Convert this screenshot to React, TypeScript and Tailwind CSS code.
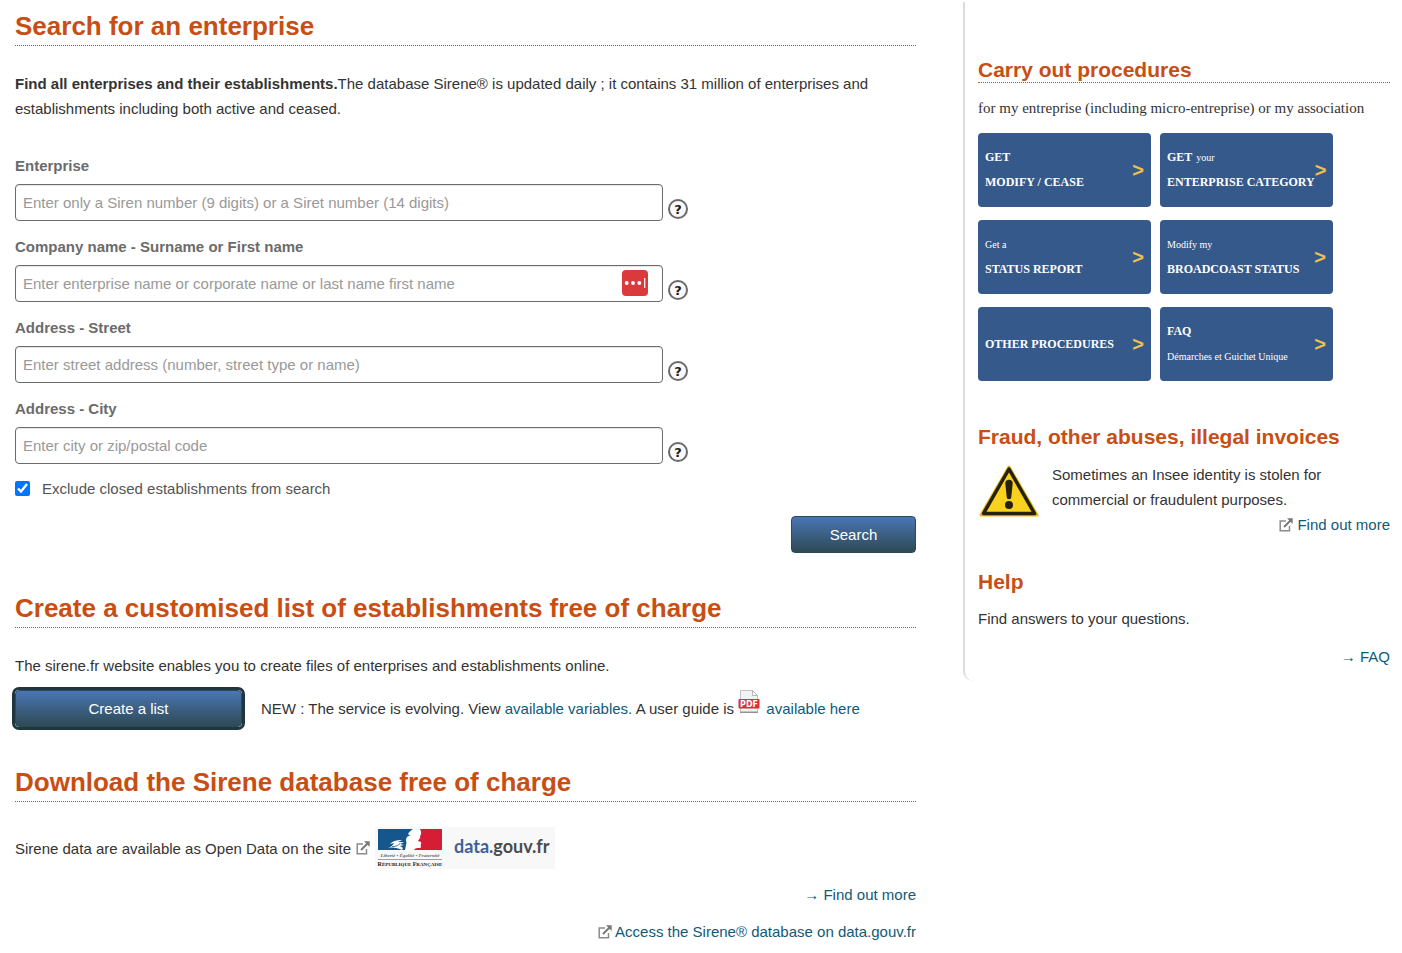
import React from "react";

type Field = { id: string; label: string; placeholder: string; vault?: boolean };

const fields: Field[] = [
  {
    id: "enterprise",
    label: "Enterprise",
    placeholder: "Enter only a Siren number (9 digits) or a Siret number (14 digits)",
  },
  {
    id: "company",
    label: "Company name - Surname or First name",
    placeholder: "Enter enterprise name or corporate name or last name first name",
    vault: true,
  },
  {
    id: "street",
    label: "Address - Street",
    placeholder: "Enter street address (number, street type or name)",
  },
  {
    id: "city",
    label: "Address - City",
    placeholder: "Enter city or zip/postal code",
  },
];

const big = "text-[12px] font-bold";
const small = "text-[10px]";

const tiles = [
  [{ text: "GET", style: big }, { text: "MODIFY / CEASE", style: big }],
  [{ text: "GET", extra: "your", style: big }, { text: "ENTERPRISE CATEGORY", style: big }],
  [{ text: "Get a", style: small }, { text: "STATUS REPORT", style: big }],
  [{ text: "Modify my", style: small }, { text: "BROADCOAST STATUS", style: big }],
  [{ text: "OTHER PROCEDURES", style: big }],
  [{ text: "FAQ", style: big }, { text: "Démarches et Guichet Unique", style: small }],
];

const linkStyle = "text-[#0f5a78] hover:underline";
const buttonStyle =
  "h-[37px] cursor-pointer rounded border border-[#2f4858] bg-linear-to-b from-[#4a76b4] to-[#2f4a56] text-white";

const ExternalIcon = () => (
  <svg width="14" height="14" viewBox="0 0 14 14" className="inline-block shrink-0" aria-hidden="true">
    <path d="M7 3H1.2v9.800h9.300V8" fill="none" stroke="#8b8b8b" strokeWidth="1.500" />
    <path d="M5 9 11.500 2.500" stroke="#777" strokeWidth="2" />
    <path d="M8 0.300h5.700V6z" fill="#777" />
  </svg>
);

const WarningIcon = () => (
  <svg width="62" height="54" viewBox="0 0 62 54" className="shrink-0" aria-hidden="true">
    <path d="M31 3 59 51H3z" fill="#f6cf1c" stroke="#e8b818" strokeWidth="3" strokeLinejoin="round" />
    <path d="M31 5 56.500 49.500h-51z" fill="#f8d21c" stroke="#26210c" strokeWidth="3.500" strokeLinejoin="round" />
    <path d="M27.300 19.500a3.700 3.700 0 0 1 7.400 0L33.300 33a2.300 2.300 0 0 1-4.600 0z" fill="#26210c" />
    <circle cx="31" cy="41" r="4" fill="#26210c" />
  </svg>
);

const PdfIcon = () => (
  <svg width="22" height="25" viewBox="0 0 22 25" className="-mt-2 mr-0.5 inline-block align-baseline" aria-hidden="true">
    <path d="M2.500 1.500h12l5 5v16.500h-17z" fill="#f3f3f3" stroke="#c4c4c4" />
    <path d="M14.500 1.500v5h5z" fill="#fff" stroke="#b5b5b5" />
    <path d="M2 23.300h18" stroke="#8a8a8a" strokeWidth="1.200" />
    <rect x="0.500" y="10" width="21" height="9.500" rx="1" fill="#dc2f34" />
    <text x="11" y="18" textAnchor="middle" fontSize="8" fontWeight="bold" fill="#fff" fontFamily="DejaVu Sans, sans-serif">
      PDF
    </text>
  </svg>
);

const VaultIcon = () => (
  <svg width="26" height="26" viewBox="0 0 26 26" aria-hidden="true">
    <rect width="26" height="26" rx="4" fill="#db3a3d" />
    <circle cx="4.700" cy="13" r="1.900" fill="#fff" />
    <circle cx="11" cy="13" r="1.900" fill="#fff" />
    <circle cx="17.300" cy="13" r="1.900" fill="#fff" />
    <path d="M22.700 8v10" stroke="#fff" strokeWidth="1.200" />
  </svg>
);

const DataGouvLogo = () => (
  <svg width="180" height="42" viewBox="0 0 180 42" role="img" aria-label="data.gouv.fr">
    <rect width="180" height="42" fill="#f8f8f8" />
    <rect x="3" y="2" width="64" height="21" fill="#fff" />
    <path d="M3 2h35c-2 1-4 3-5 5 1 1 2 1 3 1-3 1-5 2-5 5 0 2 1 3 0 5l-1 5H3z" fill="#15568d" />
    <path d="M13 21c3-1 5-3 6-5l-4 1c3-3 6-4 12-4l-4 2 6 0-4 2 4 1-4 1 3 2-1 2c-4-2-9-3-14-2z" fill="#fff" />
    <path d="M17 19.500c3 .5 6-1 8-3" fill="none" stroke="#15568d" strokeWidth="0.800" />
    <path d="M45 2h22v21H39c1-2 3-2 6-2 2-1 0-2 1-3-1-1 1-2 0-3l-3-1c1-2 3-3 2-5 2-2 1-5 0-7z" fill="#d51d36" />
    <text x="35" y="30" textAnchor="middle" fontSize="5" fontStyle="italic" fontWeight="bold" fill="#666" fontFamily="Liberation Serif, serif">
      Liberté • Égalité • Fraternité
    </text>
    <path d="M3 32.500h64" stroke="#777" strokeWidth="0.700" />
    <text x="35" y="39" textAnchor="middle" fontSize="5" fontWeight="bold" fill="#222" fontFamily="Liberation Serif, serif">
      <tspan fontSize="6">R</tspan>ÉPUBLIQUE <tspan fontSize="6">F</tspan>RANÇAISE
    </text>
    <text x="79" y="26" fontSize="18" fontWeight="bold" fill="#4b4b4b" fontFamily="Lato, sans-serif">
      <tspan fill="#3f619b">data.</tspan>gouv.fr
    </text>
  </svg>
);

const Title = ({ children }: { children: React.ReactNode }) => (
  <h2 className="border-b border-dotted border-[#b0501c] pb-px text-[26px] leading-9 font-bold text-[#c84e14]">
    {children}
  </h2>
);

const SearchField = ({ id, label, placeholder, vault }: Field) => (
  <div>
    <label htmlFor={id} className="mb-1.5 block font-bold text-[#6b6b6b]">
      {label}
    </label>
    <div className="flex items-end gap-[5px]">
      <div className="relative w-[648px]">
        <input
          id={id}
          type="text"
          placeholder={placeholder}
          className="block h-[37px] w-full rounded border border-[#6b6b6b] bg-white px-[7px] shadow-[inset_0_1px_1px_#0000001a] placeholder:text-[#999]"
        />
        {vault && (
          <span className="absolute top-[5px] right-[15px]">
            <VaultIcon />
          </span>
        )}
      </div>
      <button
        type="button"
        aria-label={`Help: ${label}`}
        className="mb-0.5 flex size-5 items-center justify-center rounded-full border-2 border-[#6a6a6a] bg-[#fafafa] font-['DejaVu_Sans',sans-serif] text-[13px] leading-none font-bold text-[#1a1a1a]"
      >
        ?
      </button>
    </div>
  </div>
);

const Procedures = () => (
  <div className="mt-3 grid grid-cols-[173px_173px] gap-x-[9px] gap-y-[13px]">
    {tiles.map((lines, i) => (
      <a
        key={i}
        href="#"
        className="flex h-[74px] items-center justify-between rounded-[4px] bg-[#36598b] pr-[7px] pl-[7px] font-['Liberation_Serif',serif] text-white"
      >
        <span className="whitespace-nowrap">
          {lines.map((line) => (
            <span key={line.text} className={`block leading-[25px] ${line.style}`}>
              {line.text}
              {"extra" in line && <span className="ml-1 text-[10px] font-normal">{line.extra}</span>}
            </span>
          ))}
        </span>
        <span className="font-['Liberation_Sans',sans-serif] text-[20px] font-bold text-[#f2c04a]">&gt;</span>
      </a>
    ))}
  </div>
);

const App = () => {
  return (
    <div className="flex items-start justify-between gap-[47px] bg-white pr-3 pb-2 pl-[15px] font-['Liberation_Sans',Arial,sans-serif] text-[15px] leading-[25px] text-[#333]">
      <main className="min-w-0 flex-1 pt-2">
        <Title>Search for an enterprise</Title>
        <p className="mt-[25px]">
          <strong>Find all enterprises and their establishments.</strong>The database Sirene® is updated daily ; it
          contains 31 million of enterprises and establishments including both active and ceased.
        </p>

        <form className="mt-8" onSubmit={(e) => e.preventDefault()}>
          <div className="grid gap-[13px]">
            {fields.map((field) => (
              <SearchField key={field.id} {...field} />
            ))}
          </div>
          <div className="mt-3 flex items-center gap-3">
            <input id="closed" type="checkbox" defaultChecked className="size-[15px] accent-[#0075ff]" />
            <label htmlFor="closed" className="text-[#555]">
              Exclude closed establishments from search
            </label>
          </div>
          <div className="mt-[15px] flex justify-end">
            <button type="submit" className={`${buttonStyle} w-[125px]`}>
              Search
            </button>
          </div>
        </form>

        <div className="mt-[37px]">
          <Title>Create a customised list of establishments free of charge</Title>
          <p className="mt-[25px]">The sirene.fr website enables you to create files of enterprises and establishments online.</p>
          <div className="mt-3 flex items-center gap-[19px]">
            <button type="button" className={`${buttonStyle} w-[227px] ring-3 ring-[#1f3540]`}>
              Create a list
            </button>
            <p>
              NEW : The service is evolving. View{" "}
              <a href="#" className={linkStyle}>
                available variables.
              </a>{" "}
              A user guide is <PdfIcon />{" "}
              <a href="#" className={linkStyle}>
                available here
              </a>
            </p>
          </div>
        </div>

        <div className="mt-[37px]">
          <Title>Download the Sirene database free of charge</Title>
          <p className="mt-[25px] flex items-center gap-[5px]">
            Sirene data are available as Open Data on the site
            <a href="#" className="flex items-center gap-[5px]">
              <ExternalIcon />
              <DataGouvLogo />
            </a>
          </p>
          <p className="mt-[13px] text-right">
            <a href="#" className={linkStyle}>
              → Find out more
            </a>
          </p>
          <p className="mt-3 flex justify-end">
            <a href="#" className={`flex items-center gap-[3px] ${linkStyle}`}>
              <ExternalIcon />
              Access the Sirene® database on data.gouv.fr
            </a>
          </p>
        </div>
      </main>

      <aside className="mt-0.5 w-[427px] rounded-bl-[10px] border-l-2 border-[#dcdcdc] pt-14 pb-3 pl-[13px]">
        <h3 className="border-b border-dotted border-[#c84e14] text-[21px] leading-6 font-bold text-[#c84e14]">
          Carry out procedures
        </h3>
        <p className="mt-[13px] font-['Liberation_Serif',serif]">
          for my entreprise (including micro-entreprise) or my association
        </p>
        <Procedures />

        <h3 className="mt-11 text-[21px] leading-6 font-bold text-[#c84e14]">Fraud, other abuses, illegal invoices</h3>
        <div className="mt-[13px] flex items-start gap-3">
          <div className="-mb-2 pt-0.5">
            <WarningIcon />
          </div>
          <p>Sometimes an Insee identity is stolen for commercial or fraudulent purposes.</p>
        </div>
        <p className="flex justify-end">
          <a href="#" className={`flex items-center gap-1 ${linkStyle}`}>
            <ExternalIcon />
            Find out more
          </a>
        </p>

        <h3 className="mt-[33px] text-[21px] leading-6 font-bold text-[#c84e14]">Help</h3>
        <p className="mt-3">Find answers to your questions.</p>
        <p className="mt-[13px] text-right">
          <a href="#" className={linkStyle}>
            → FAQ
          </a>
        </p>
      </aside>
    </div>
  );
};

export default App;
